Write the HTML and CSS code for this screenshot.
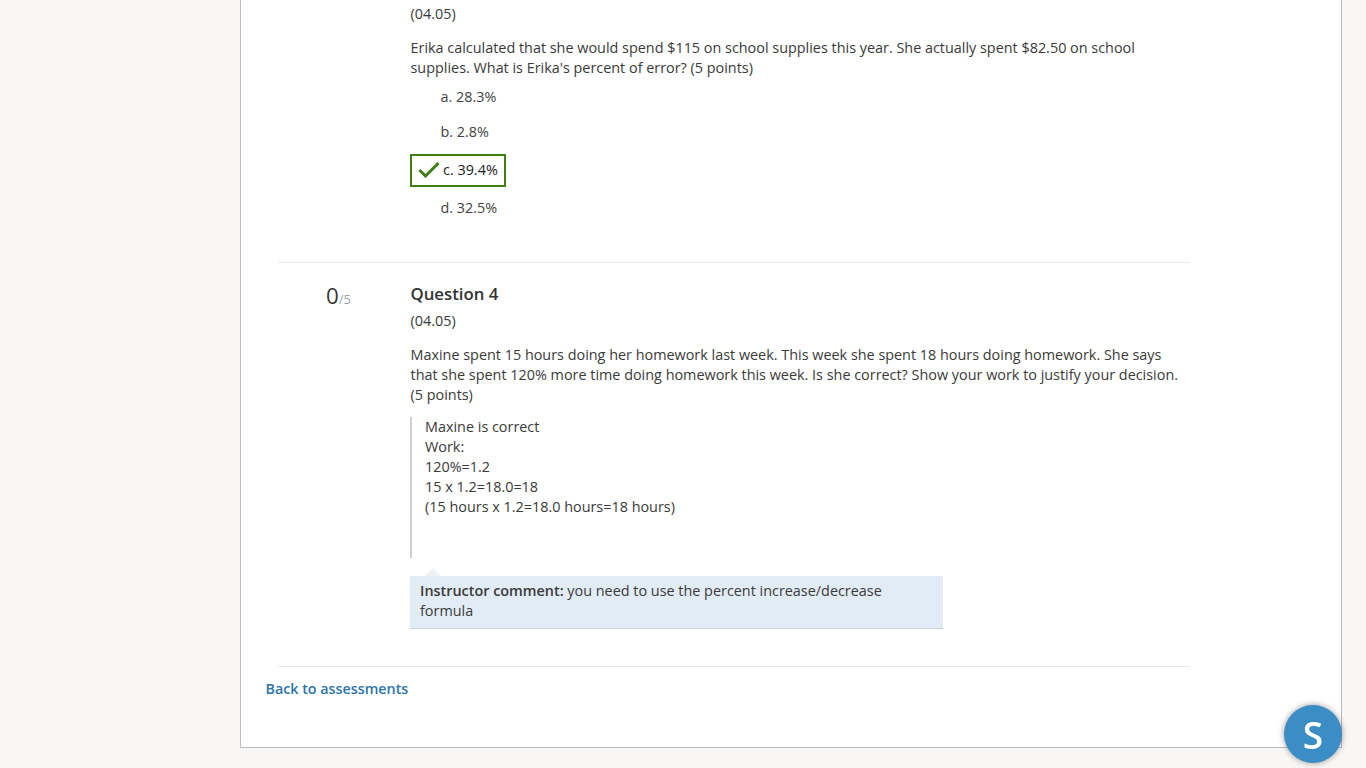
FILE: index.html
```html
<!DOCTYPE html>
<html lang="en">
<head>
<meta charset="utf-8">
<title>Assessment results</title>
<link rel="stylesheet" href="styles.css">
</head>
<body>
<main class="card">
  <section class="question first">
    <div class="score"></div>
    <div class="body">
      <p class="code">(04.05)</p>
      <p class="text">Erika calculated that she would spend $115 on school supplies this year. She actually spent $82.50 on school supplies. What is Erika's percent of error? (5 points)</p>
      <ul class="options">
        <li class="option">a. 28.3%</li>
        <li class="option">b. 2.8%</li>
        <li class="option correct">
          <svg class="check" width="22" height="16" viewBox="0 0 22 16" aria-hidden="true"><path d="M1.5 8 L7.5 14 L20.5 1" fill="none" stroke="#3f7f12" stroke-width="3"/></svg>
          <span>c. 39.4%</span>
        </li>
        <li class="option">d. 32.5%</li>
      </ul>
    </div>
  </section>
  <section class="question second">
    <div class="score"><span class="got">0</span><span class="max">/5</span></div>
    <div class="body">
      <h2 class="title">Question 4</h2>
      <p class="code">(04.05)</p>
      <p class="text">Maxine spent 15 hours doing her homework last week. This week she spent 18 hours doing homework. She says that she spent 120% more time doing homework this week. Is she correct? Show your work to justify your decision. (5 points)</p>
      <blockquote class="answer">Maxine is correct<br>Work:<br>120%=1.2<br>15 x 1.2=18.0=18<br>(15 hours x 1.2=18.0 hours=18 hours)</blockquote>
      <div class="comment"><strong>Instructor comment:</strong> you need to use the percent increase/decrease formula</div>
    </div>
  </section>
  <footer class="foot"><a class="back" href="#">Back to assessments</a></footer>
</main>
<button class="fab" type="button">S</button>
</body>
</html>
```
FILE: styles.css
```css
* { box-sizing: border-box; }
html, body { height: 100%; }
body {
  margin: 0;
  background: #f8f7f5;
  font-family: "Open Sans", sans-serif;
  font-size: 14.4px;
  line-height: 20px;
  color: #3a3a3a;
  overflow: hidden;
}
.card {
  margin-left: 240px;
  width: 1102px;
  height: 748px;
  background: #fff;
  border: 1px solid #bdbdbd;
  border-top: 0;
  padding: 4px 151px 0 37px;
}
.question { display: flex; }
.first { height: 259px; border-bottom: 1px solid #e6e6e6; }
.second { height: 404px; padding-top: 21px; border-bottom: 1px solid #e6e6e6; }
.score { width: 132.5px; flex: none; padding-right: 59.5px; text-align: right; margin-top: -1px; }
.got { font-size: 22.4px; line-height: 26px; color: #3a3a3a; }
.max { font-size: 13px; color: #9aa1a6; }
.body { flex: 1; min-width: 0; }
.code, .text { margin: 0; }
.text { margin-top: 14px; }
.title { margin: 0 0 7px; font-size: 16.8px; font-weight: 600; line-height: 20px; color: #333; }
.options { list-style: none; margin: 9px 0 0; padding: 0; }
.option { height: 20px; padding-left: 30px; margin-bottom: 15px; color: #444; }
.correct {
  display: flex;
  align-items: center;
  width: fit-content;
  height: 33px;
  margin: -3px 0 11px -0.5px;
  padding: 0 6px 1px 6.5px;
  border: 2px solid #3f7f12;
  color: #222;
  gap: 3px;
}
.check { margin-left: -0.5px; }
.answer {
  margin: 12px 0 0 -0.5px;
  height: 141px;
  padding: 0 0 0 13px;
  border-left: 2px solid #cfcfcf;
}
.comment {
  position: relative;
  margin-top: 18px;
  margin-left: -0.5px;
  width: 533px;
  padding: 5px 10px 7px;
  background: #e2ecf6;
  border-bottom: 1px solid #c9d3dc;
}
.comment::before {
  content: "";
  position: absolute;
  left: 15px;
  top: -8px;
  border: solid transparent;
  border-width: 0 8px 8px;
  border-bottom-color: #edf1f4;
}
.comment strong { font-weight: 600; }
.foot { margin-left: -12.5px; padding-top: 12px; }
.back { color: #2b75a8; font-weight: 600; font-size: 14.3px; text-decoration: none; }
.fab {
  position: fixed;
  left: 1284px;
  top: 705px;
  width: 58px;
  height: 58px;
  border: 0;
  border-radius: 50%;
  background: #3a8dc5;
  color: #fff;
  font-family: "Open Sans", sans-serif;
  font-size: 37px;
  font-weight: 600;
  line-height: 60px;
  padding: 0;
  box-shadow: 0 0 6px rgba(0,0,0,.4);
}
```
